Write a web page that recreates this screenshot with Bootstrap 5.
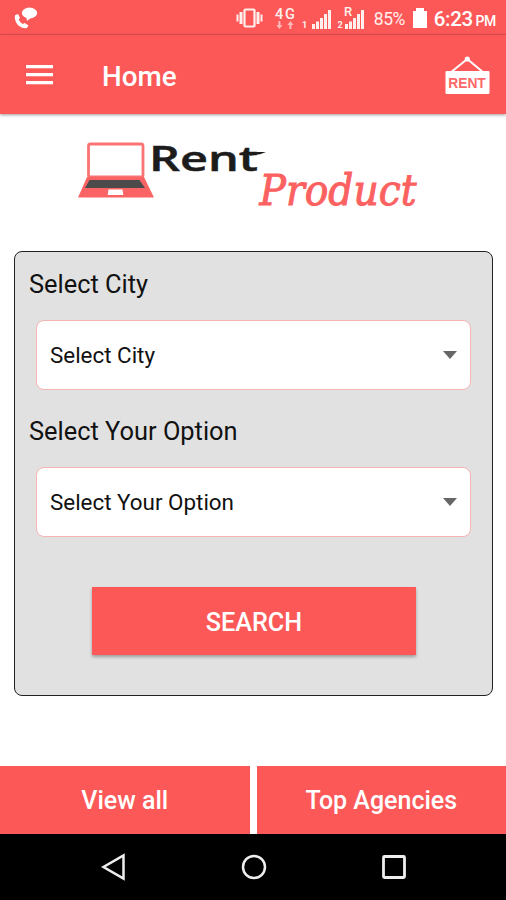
<!DOCTYPE html>
<html lang="en">
<head>
<meta charset="utf-8">
<meta name="viewport" content="width=device-width, initial-scale=1">
<title>Rent Product</title>
<link href="https://cdn.jsdelivr.net/npm/bootstrap@5.3.0/dist/css/bootstrap.min.css" rel="stylesheet">
<style>
  :root { --brand: #fd5858; }
  body { font-family: Roboto, "Liberation Sans", sans-serif; color: #111; }
  svg { display: block; flex: none; }
  .screen { width: 506px; height: 900px; }
  .bg-brand { background: var(--brand); }
  .status-bar { height: 35px; border-bottom: 1px solid #e04f50; padding: 2px 10px 0 14px; }
  .battery-text { font-size: 17.5px; line-height: 34px; margin: 2px 0 0 10px; width: 31px; white-space: nowrap; letter-spacing: -.5px; color: #fff0ee; }
  .clock { font-size: 20.5px; line-height: 34px; font-weight: 500; margin: 3px 0 0 7px; letter-spacing: -.35px; white-space: nowrap; }
  .clock small { font-size: 14px; font-weight: 500; margin-left: -2px; }
  .app-bar { height: 79px; padding: 0 16px 0 26px; box-shadow: 0 1px 3px rgba(0,0,0,.4); }
  .app-title { font-size: 27.8px; font-weight: 500; line-height: 32px; margin: 4px 0 0 49px; }
  .logo-area { height: 137px; padding: 21px 0 0 70px; }
  .search-panel { margin: 0 13px 0 14px; height: 445px; background: #e1e1e1; border: 1.5px solid #222; border-radius: 8px; padding: 15px 20px 0 14px; }
  .field-label { font-size: 25.4px; line-height: 34px; white-space: nowrap; margin-bottom: 19px; }
  .picker { height: 70px; margin-left: 7px; width: 435px; background: #fff; border: 1px solid #f5b5b3; border-radius: 8px; padding: 2px 13px 0; font-size: 22.4px; color: #111; }
  .picker:hover, .picker:active { background: #fff; }
  .picker svg { margin-top: -3px; }
  .search-btn { width: 324px; height: 68px; font-size: 25.2px; font-weight: 500; box-shadow: 0 2px 3px rgba(0,0,0,.3); margin: 50px 0 0 63px; padding: 3px 0 0; }
  .bottom-tabs { gap: 7px; height: 68px; }
  .tab-btn { font-size: 25px; font-weight: 500; padding: 2px 0 0; }
  .nav-keys { height: 66px; background: #000; padding: 0 98px 0 100px; }
</style>
</head>
<body>
<div class="screen d-flex flex-column bg-white overflow-hidden">
  <header class="text-white position-relative">
    <div class="status-bar bg-brand d-flex align-items-center">
      <svg width="25" height="24" viewBox="14 6 25 24" fill="#fff">
        <path d="M15 15.200 18 14l2 4-1.300 1.600c.9 1.900 2.200 3.300 4 4.300l2-1 3.800 2.600-1.600 2.600C20 29.500 13.500 22 15 15.200Z"/>
        <ellipse cx="29.500" cy="13" rx="7.700" ry="5.400"/>
        <path d="m26 16 1 5 5-4Z"/>
      </svg>
      <svg class="ms-auto" width="129" height="30" viewBox="235 3 129 30" fill="#fff0ee">
        <rect x="244.500" y="9.500" width="10" height="17" rx="1" fill="none" stroke="#fff0ee" stroke-width="2.200"/>
        <path d="M239.500 12h3v12h-3zM236.500 14.500h2v7h-2zM256.500 12h3v12h-3zM260.500 14.500h2v7h-2z"/>
        <text x="275" y="18.500" font-size="14.500" font-weight="500" textLength="20">4G</text>
        <path opacity=".65" d="M278.400 21h2v4h2l-3 4-3-4h2zM289.400 29h2v-4h2l-3-4-3 4h2z"/>
        <text x="302" y="28" font-size="9" font-weight="700">1</text>
        <path d="M312 24h3v5h-3zM316 21.500h3v7.500h-3zM320 18h3v11h-3zM324 14h3v15h-3zM328 10h3v19h-3z"/>
        <text x="344" y="16" font-size="13" font-weight="500">R</text>
        <text x="337.500" y="28" font-size="9" font-weight="700">2</text>
        <path d="M345 24h3v5h-3zM349 21.500h3v7.500h-3zM353 18h3v11h-3zM357 14h3v15h-3zM361 10h3v19h-3z"/>
      </svg>
      <span class="battery-text">85%</span>
      <svg class="ms-2" width="14" height="20" viewBox="0 0 14 20" fill="#fff"><path d="M0 3h3V0h8v3h3v17H0z"/></svg>
      <span class="clock">6:23 <small>PM</small></span>
    </div>
    <div class="app-bar bg-brand d-flex align-items-center">
      <svg width="27" height="20" viewBox="0 0 27 20" fill="#fff"><path d="M0 0h27v3.300H0zM0 8h27v3.300H0zM0 16h27v3.300H0z"/></svg>
      <h1 class="app-title">Home</h1>
      <svg class="ms-auto" width="45" height="40" viewBox="445 55 45 40">
        <path d="m450 73 17.300-14L484 73" fill="none" stroke="#fff" stroke-width="2"/>
        <circle cx="467.300" cy="59" r="2.600" fill="#fff"/>
        <rect x="445.500" y="71" width="44" height="23" rx="1" fill="#fff"/>
        <text x="448.300" y="87.500" font-family="Liberation Sans, sans-serif" font-size="14" font-weight="700" fill="#fd6868" textLength="37.500" lengthAdjust="spacingAndGlyphs">RENT</text>
      </svg>
    </div>
  </header>

  <main class="flex-grow-1">
    <div class="logo-area">
      <svg width="360" height="85" viewBox="70 135 360 85" role="img" aria-label="Rent Product">
        <rect x="88.500" y="144" width="54.500" height="33" rx="2" fill="#fff" stroke="#fb7474" stroke-width="2.800"/>
        <path d="M87 177h57l10 20.500H78z" fill="#fb6464"/>
        <path d="M89.500 180h50l5.500 8H85z" fill="#4c4a4a"/>
        <path d="M108.500 189.500h14l.8 5.500h-15.600z" fill="#fff"/>
        <text x="149" y="170.500" font-family="Open Sans, sans-serif" font-size="35" font-weight="600" fill="#1c1c1c" stroke="#1c1c1c" stroke-width=".5" textLength="109" lengthAdjust="spacingAndGlyphs">Rent</text>
        <path d="M250 152h16l-6 2.200-10 1.500z" fill="#1c1c1c"/>
        <text x="259.500" y="205" font-family="DejaVu Serif, serif" font-size="42" font-style="italic" fill="#fc6161" stroke="#fc6161" stroke-width="1" textLength="157" lengthAdjust="spacingAndGlyphs">Product</text>
      </svg>
    </div>

    <section class="search-panel">
      <div class="field-label">Select City</div>
      <button type="button" class="picker btn d-flex align-items-center justify-content-between">
        <span>Select City</span>
        <svg width="14" height="8" viewBox="0 0 14 8" fill="#666"><path d="M0 0h14L7 8z"/></svg>
      </button>
      <div class="field-label mt-4">Select Your Option</div>
      <button type="button" class="picker btn d-flex align-items-center justify-content-between">
        <span>Select Your Option</span>
        <svg width="14" height="8" viewBox="0 0 14 8" fill="#666"><path d="M0 0h14L7 8z"/></svg>
      </button>
      <button type="button" class="search-btn btn bg-brand text-white border-0 rounded-0">SEARCH</button>
    </section>
  </main>

  <div class="bottom-tabs d-flex">
    <button type="button" class="tab-btn btn bg-brand text-white border-0 rounded-0 w-50">View all</button>
    <button type="button" class="tab-btn btn bg-brand text-white border-0 rounded-0 w-50">Top Agencies</button>
  </div>
  <nav class="nav-keys d-flex align-items-center justify-content-between">
    <svg width="27" height="28" viewBox="0 0 27 28" fill="none" stroke="#eee" stroke-width="2.500"><path d="M23.500 2.500v23L3.500 14z"/></svg>
    <svg width="28" height="28" viewBox="0 0 28 28" fill="none" stroke="#eee" stroke-width="2.500"><circle cx="14" cy="14" r="11"/></svg>
    <svg width="28" height="28" viewBox="0 0 28 28" fill="none" stroke="#eee" stroke-width="2.800"><rect x="3.500" y="3.500" width="21" height="21" rx="1"/></svg>
  </nav>
</div>
<script src="https://cdn.jsdelivr.net/npm/bootstrap@5.3.0/dist/js/bootstrap.bundle.min.js"></script>
</body>
</html>
